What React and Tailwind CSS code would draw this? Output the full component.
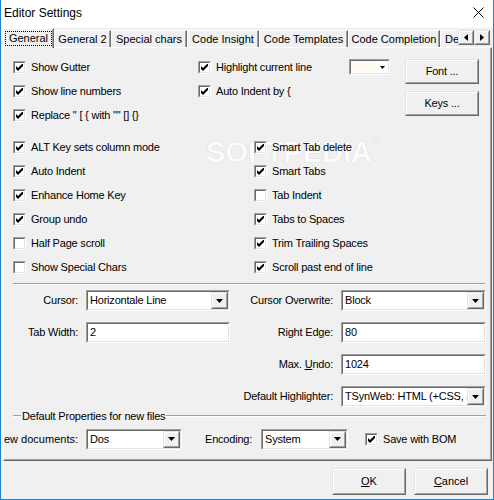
import React from 'react';

const Raised = ({ className = '', children }) => (
  <div className={`border border-t-[#e3e3e3] border-l-[#e3e3e3] border-r-[#696969] border-b-[#696969] ${className}`}>
    <div className="w-full h-full flex items-center justify-center bg-[#f0f0f0] border border-t-white border-l-white border-r-[#a0a0a0] border-b-[#a0a0a0]">
      {children}
    </div>
  </div>
);

const Sunken = ({ className = '', children }) => (
  <div className={`shrink-0 border border-t-[#a0a0a0] border-l-[#a0a0a0] border-r-white border-b-white ${className}`}>
    <div className="w-full h-full flex items-center bg-white border border-t-[#696969] border-l-[#696969] border-r-[#e3e3e3] border-b-[#e3e3e3]">
      {children}
    </div>
  </div>
);

const DownArrow = () => (
  <svg width="7" height="4" viewBox="0 0 7 4">
    <path d="M0 0H7L3.5 4Z" fill="#000" />
  </svg>
);

const CheckBox = ({ checked }) => (
  <div className="w-[13px] h-[13px] shrink-0 border border-t-[#a0a0a0] border-l-[#a0a0a0] border-r-white border-b-white">
    <div className="w-full h-full flex items-center justify-center bg-white border border-t-[#696969] border-l-[#696969] border-r-[#e3e3e3] border-b-[#e3e3e3]">
      {checked && (
        <svg width="7" height="7" viewBox="0 0 7 7">
          <path d="M0 2L2 4L7 -1V2L2 7L0 5Z" fill="#000" />
        </svg>
      )}
    </div>
  </div>
);

const Check = ({ label, checked = true, className = '' }) => (
  <div className={`flex items-center gap-[5px] h-6 ${className}`}>
    <CheckBox checked={checked} />
    <span className="whitespace-nowrap tracking-[-0.2px]">{label}</span>
  </div>
);

const Combo = ({ value, className = '' }) => (
  <Sunken className={`h-[21px] ${className}`}>
    <span className="flex-1 pl-[2px] overflow-hidden whitespace-nowrap tracking-[-0.2px]">{value}</span>
    <Raised className="w-[17px] h-full shrink-0">
      <DownArrow />
    </Raised>
  </Sunken>
);

const Field = ({ value, className = '' }) => (
  <Sunken className={`h-[21px] ${className}`}>
    <span className="pl-[2px] whitespace-nowrap">{value}</span>
  </Sunken>
);

const Label = ({ children, className = '' }) => (
  <div className={`h-[21px] flex items-center justify-end whitespace-nowrap overflow-hidden ${className}`}>
    <span className="shrink-0">{children}</span>
  </div>
);

const tabs = [
  { label: 'General 2', w: 'w-[57px]' },
  { label: 'Special chars', w: 'w-[76px]' },
  { label: 'Code Insight', w: 'w-[72px]' },
  { label: 'Code Templates', w: 'w-[89px]' },
  { label: 'Code Completion', w: 'w-[92px]' },
];

export default function App() {
  return (
    <div className="relative isolate w-[494px] h-[500px] flex flex-col bg-[#f0f0f0] border-l border-r border-b border-[#1883d7] text-[11px] text-black font-['Liberation_Sans',Arial,sans-serif] overflow-hidden">
      {/* watermark, behind the controls */}
      <div className="absolute -z-10 left-[205px] top-[131px] text-[29px] font-bold text-[#fbfbfb] [text-shadow:0_0_1px_#c4c4c4] pointer-events-none select-none">
        SOFTPEDIA<span className="text-[10px] align-top">®</span>
      </div>

      {/* title bar */}
      <div className="h-[28px] shrink-0 bg-white flex items-center justify-between pl-[3px] pr-[9px]">
        <span className="text-[12px] pb-[3px]">Editor Settings</span>
        <svg width="11" height="11" viewBox="0 0 11 11" className="mb-[3px]">
          <path d="M0.5 0.5L10.5 10.5M10.5 0.5L0.5 10.5" stroke="#000" strokeWidth="1" />
        </svg>
      </div>

      {/* tabs */}
      <div className="h-[19px] shrink-0 flex items-end pl-[2px]">
        <div className="relative z-10 w-[51px] h-[20px] -mb-px flex items-center justify-center bg-[#f0f0f0] border-t border-l border-white border-r border-r-[#696969] shadow-[inset_-1px_0_#a0a0a0]">
          <span className="border border-dotted border-black px-[3px] leading-[13px]">General</span>
        </div>
        {tabs.map((t) => (
          <div
            key={t.label}
            className={`${t.w} h-[17px] flex items-center justify-center whitespace-nowrap border-t border-l border-white border-r border-r-[#696969] shadow-[inset_-1px_0_#a0a0a0]`}
          >
            {t.label}
          </div>
        ))}
        <div className="w-[18px] h-[17px] overflow-hidden flex items-center pl-[4px] border-t border-l border-white whitespace-nowrap">
          Default
        </div>
        <div className="self-start mt-[2px] flex">
          <Raised className="w-[16px] h-[15px]">
            <svg width="4" height="7" viewBox="0 0 4 7"><path d="M4 0V7L0 3.5Z" fill="#000" /></svg>
          </Raised>
          <Raised className="w-[16px] h-[15px]">
            <svg width="4" height="7" viewBox="0 0 4 7"><path d="M0 0V7L4 3.5Z" fill="#000" /></svg>
          </Raised>
        </div>
      </div>

      {/* tab sheet */}
      <div className="ml-[2px] mr-px h-[414px] shrink-0 flex flex-col border-t border-l border-white border-r border-b border-r-[#696969] border-b-[#696969] shadow-[inset_-1px_-1px_#a0a0a0]">
        {/* top options */}
        <div className="flex items-start pt-[7px] pl-[9px]">
          <div className="w-[185px] flex flex-col">
            <Check label="Show Gutter" />
            <Check label="Show line numbers" />
            <Check label={'Replace " [ { with "" [] {}'} />
          </div>
          <div className="w-[151px] flex flex-col">
            <Check label="Highlight current line" />
            <Check label="Auto Indent by {" />
          </div>
          <Sunken className="w-[41px] h-[16px] mt-[4px]">
            <div className="flex-1 h-full bg-[#fffbf0] border border-white" />
            <div className="w-[12px] h-full flex items-center justify-center">
              <svg width="5" height="3" viewBox="0 0 5 3"><path d="M0 0H5L2.5 3Z" fill="#000" /></svg>
            </div>
          </Sunken>
          <div className="ml-[15px] flex flex-col">
            <Raised className="w-[74px] h-[25px] mt-[4px]">
              <span className="tracking-[-0.2px]">Font ...</span>
            </Raised>
            <Raised className="w-[74px] h-[25px] mt-[7px]">
              <span className="tracking-[-0.2px]">Keys ...</span>
            </Raised>
          </div>
        </div>

        {/* main options */}
        <div className="flex mt-[8px] pl-[9px]">
          <div className="w-[241px] flex flex-col">
            <Check label="ALT Key sets column mode" />
            <Check label="Auto Indent" />
            <Check label="Enhance Home Key" />
            <Check label="Group undo" />
            <Check label="Half Page scroll" checked={false} />
            <Check label="Show Special Chars" checked={false} />
          </div>
          <div className="flex flex-col">
            <Check label="Smart Tab delete" />
            <Check label="Smart Tabs" />
            <Check label="Tab Indent" checked={false} />
            <Check label="Tabs to Spaces" />
            <Check label="Trim Trailing Spaces" />
            <Check label="Scroll past end of line" />
          </div>
        </div>

        {/* separator */}
        <div className="ml-[9px] mt-[4px] w-[472px] h-[2px] border-t border-t-[#a0a0a0] border-b border-b-white" />

        {/* fields */}
        <div className="flex items-start mt-[5px] tracking-[-0.2px]">
          <div className="flex flex-col gap-[11px]">
            <div className="flex items-center">
              <Label className="w-[74px]">Cursor:</Label>
              <Combo value="Horizontale Line" className="ml-[8px] w-[144px]" />
            </div>
            <div className="flex items-center">
              <Label className="w-[74px]">Tab Width:</Label>
              <Field value="2" className="ml-[8px] w-[144px]" />
            </div>
          </div>
          <div className="flex flex-col gap-[11px]">
            <div className="flex items-center">
              <Label className="w-[103px]">Cursor Overwrite:</Label>
              <Combo value="Block" className="ml-[8px] w-[145px]" />
            </div>
            <div className="flex items-center">
              <Label className="w-[103px]">Right Edge:</Label>
              <Field value="80" className="ml-[8px] w-[145px]" />
            </div>
            <div className="flex items-center">
              <Label className="w-[103px]">
                Max. <span className="underline underline-offset-[1px]">U</span>ndo:
              </Label>
              <Field value="1024" className="ml-[8px] w-[145px]" />
            </div>
            <div className="flex items-center">
              <Label className="w-[103px]">Default Highlighter:</Label>
              <Combo value="TSynWeb: HTML (+CSS, JS, PHP)" className="ml-[8px] w-[145px]" />
            </div>
          </div>
        </div>

        {/* default properties */}
        <div className="mt-[2px] h-[14px] flex items-center pl-[9px]">
          <div className="w-[8px] h-[2px] border-t border-t-[#a0a0a0] border-b border-b-white" />
          <span className="px-px whitespace-nowrap tracking-[-0.2px]">Default Properties for new files</span>
          <div className="w-[320px] h-[2px] border-t border-t-[#a0a0a0] border-b border-b-white" />
        </div>
        <div className="flex items-center mt-[4px]">
          <Label className="w-[74px]">New documents:</Label>
          <Combo value="Dos" className="ml-[8px] w-[96px]" />
          <span className="ml-[23px] w-[56px] tracking-[-0.2px]">Encoding:</span>
          <Combo value="System" className="w-[87px]" />
          <Check label="Save with BOM" className="ml-[17px]" />
        </div>
      </div>

      {/* footer */}
      <div className="flex justify-end gap-[8px] pt-[7px] pr-[5px]">
        <Raised className="w-[74px] h-[27px]">
          <span><span className="underline underline-offset-[1px]">O</span>K</span>
        </Raised>
        <Raised className="w-[74px] h-[27px]">
          <span><span className="underline underline-offset-[1px]">C</span>ancel</span>
        </Raised>
      </div>
    </div>
  );
}
